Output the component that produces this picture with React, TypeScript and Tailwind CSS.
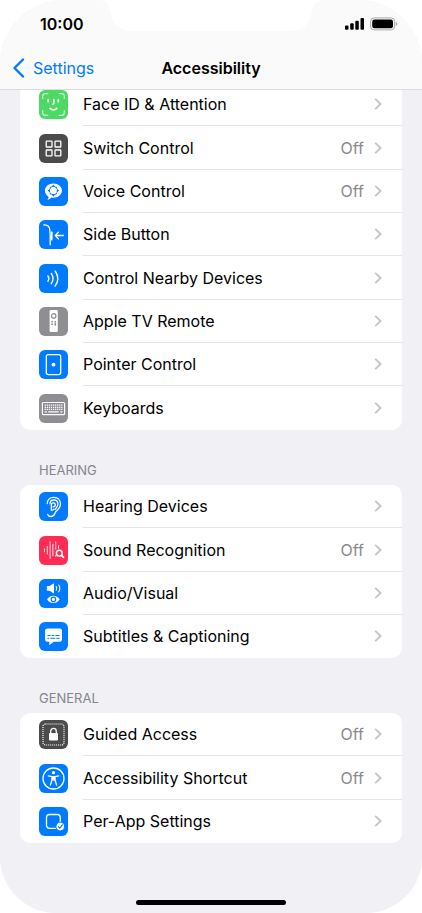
import type { ReactNode } from 'react';

interface Item {
  label: string;
  color: string;
  icon: ReactNode;
  value?: string;
}

interface Section {
  title?: string;
  items: Item[];
}

const BLUE = 'bg-[#007aff]';
const GRAY = 'bg-[#8e8e93]';
const DARK = 'bg-[#4b4b4c]';

const SECTIONS: Section[] = [
  {
    items: [
      {
        label: 'Face ID & Attention',
        color: 'bg-[#4cd964]',
        icon: (
          <>
            <path
              d="M3.7 8.5V6.2a2.5 2.5 0 0 1 2.5-2.5h2.6M20.2 3.7h2.6a2.5 2.5 0 0 1 2.5 2.5v2.3M25.3 20.5v2.3a2.5 2.5 0 0 1-2.5 2.5h-2.6M8.8 25.3H6.2a2.5 2.5 0 0 1-2.5-2.5v-2.3"
              strokeWidth="1.2"
              opacity="0.8"
            />
            <path d="M9.2 9.7v2M19.3 9.7v2" strokeWidth="1.8" />
            <path d="M14.8 9.6v3.6q0 1.1-1.3 1.1M11 18.4q3.4 3 6.8 0" strokeWidth="1.5" />
          </>
        ),
      },
      {
        label: 'Switch Control',
        color: DARK,
        value: 'Off',
        icon: (
          <g strokeWidth="1.3">
            <rect x="7.2" y="7.2" width="5.8" height="5.8" rx="0.6" />
            <rect x="16" y="7.2" width="5.8" height="5.8" rx="0.6" />
            <rect x="7.2" y="16" width="5.8" height="5.8" rx="0.6" />
            <rect x="16" y="16" width="5.8" height="5.8" rx="0.6" />
          </g>
        ),
      },
      {
        label: 'Voice Control',
        color: BLUE,
        value: 'Off',
        icon: (
          <>
            <path
              d="M14.4 6.4c4.9 0 8.6 3.2 8.6 7.2s-3.7 7.2-8.6 7.2c-.8 0-1.4-.1-2-.2-.9 1.3-2.2 2-4 2.2.9-1 1.2-2 1.1-3.1C7.3 18.4 5.9 16.2 5.9 13.6c0-4 3.7-7.2 8.5-7.2z"
              fill="#fff"
              stroke="none"
            />
            <path
              d="M14.4 7.8l2.2 2.3h-4.4zM14.4 19.4l2.2-2.3h-4.4zM8.7 13.6l2.3-2.2v4.4zM20.1 13.6l-2.3-2.2v4.4z"
              fill="#007aff"
              stroke="none"
            />
            <path d="M11.2 11l.8-.8M16.8 10.2l.8.8M11.2 16.2l.8.8M16.8 17l.8-.8" stroke="#007aff" strokeWidth="1.2" />
          </>
        ),
      },
      {
        label: 'Side Button',
        color: BLUE,
        icon: (
          <>
            <path d="M4.8 4.9c4.3 0 5.7 1.4 6 4.8.2 2.2.4 4 .4 6.5v8.6" strokeWidth="1.3" />
            <path d="M12.7 12.3v7.2" strokeWidth="1.8" />
            <path d="M16.2 15.5h8.3M19.4 12.3l-3.2 3.2 3.2 3.2" strokeWidth="1.3" />
          </>
        ),
      },
      {
        label: 'Control Nearby Devices',
        color: BLUE,
        icon: (
          <g strokeWidth="1.4">
            <path d="M8.9 11.9q1.9 2.7 0 5.4" />
            <path d="M12.3 9.5q3.5 5.1 0 10.2" />
            <path d="M16.1 7q5.4 7.6 0 15.2" />
          </g>
        ),
      },
      {
        label: 'Apple TV Remote',
        color: GRAY,
        icon: (
          <>
            <rect x="10.6" y="3" width="8.2" height="22" rx="1.3" fill="#fff" stroke="none" />
            <circle cx="14.7" cy="8.9" r="2.2" stroke="#8e8e93" strokeWidth="1.2" />
            <path d="M13.1 14.6v.1M16.3 14.6v.1M13.1 17.1v.1M16.3 16.7v1.1" stroke="#8e8e93" strokeWidth="1.7" />
          </>
        ),
      },
      {
        label: 'Pointer Control',
        color: BLUE,
        icon: (
          <>
            <rect x="7.3" y="4.6" width="14.4" height="20" rx="2" strokeWidth="1.3" />
            <circle cx="14.5" cy="14.7" r="1.9" fill="#fff" stroke="none" />
          </>
        ),
      },
      {
        label: 'Keyboards',
        color: GRAY,
        icon: (
          <>
            <rect x="3.4" y="8.5" width="22.2" height="12.2" rx="1" strokeWidth="1.2" />
            <path
              d="M5.7 11.2h17.8M5.7 13.3h17.8M5.7 15.4h17.8"
              strokeWidth="1.3"
              strokeDasharray="1.3 0.76"
              strokeLinecap="butt"
            />
            <path d="M5.7 17.8h2.2M9.3 17.8h10.4M21.3 17.8h2.2" strokeWidth="1.3" strokeLinecap="butt" />
          </>
        ),
      },
    ],
  },
  {
    title: 'Hearing',
    items: [
      {
        label: 'Hearing Devices',
        color: BLUE,
        icon: (
          <g strokeWidth="1.3">
            <path d="M8.3 11.5c0-3.8 2.9-6.2 6.5-6.2 4 0 6.7 2.8 6.7 6.8 0 5.2-4.4 5.8-5.5 9.2-.7 2.2-2.1 3.2-4.1 3.2-1.6 0-2.7-.8-3.2-2.1" />
            <path d="M11 11.7c0-2.2 1.6-3.7 3.9-3.7 2.4 0 4 1.6 4 4 0 2.7-1.7 3.7-2.8 5.5" />
            <path d="M12.3 18.3v-5.4c0-1.2.8-2 2-2s2 .8 2 1.9c0 1.3-1 2-2.3 2M12.3 18.3c1.2 0 2-.3 2.6-1.2" />
          </g>
        ),
      },
      {
        label: 'Sound Recognition',
        color: 'bg-[#ff2d55]',
        value: 'Off',
        icon: (
          <>
            <path
              d="M5.5 12.9v2.8M8.3 10.4v7.6M11.1 5.7v16.6M13.9 8.5v11.2M16.7 5.7v7.5M16.7 19.5v.8M19.5 9.8v2.6"
              strokeWidth="1"
              opacity="0.85"
            />
            <circle cx="20.3" cy="17.2" r="2.9" strokeWidth="1.4" />
            <path d="M22.5 19.4l2 2" strokeWidth="1.7" />
          </>
        ),
      },
      {
        label: 'Audio/Visual',
        color: BLUE,
        icon: (
          <>
            <path
              d="M7.8 7.7q0-.6.6-.6h2.2l3.7-2.5q.7-.4.7.4v8.9q0 .8-.7.4l-3.7-2.6H8.4q-.6 0-.6-.6z"
              fill="#fff"
              stroke="none"
            />
            <path d="M17.2 7.5q1.3 1.9 0 3.8M19.7 6q2.3 3.4 0 6.8" strokeWidth="1.1" />
            <path
              d="M8.1 20.4c1.6-2.3 3.7-3.6 6.3-3.6s4.7 1.3 6.3 3.6c-1.6 2.3-3.7 3.6-6.3 3.6s-4.7-1.3-6.3-3.6z"
              fill="#fff"
              stroke="none"
            />
            <circle cx="14.4" cy="20.4" r="2.2" fill="#fff" stroke="#007aff" strokeWidth="1.2" />
          </>
        ),
      },
      {
        label: 'Subtitles & Captioning',
        color: BLUE,
        icon: (
          <>
            <path
              d="M8.3 6.4h12.5q2.2 0 2.2 2.2v8.9q0 2.2-2.2 2.2h-6.2l-3.6 3.1q-.7.5-.7-.4v-2.7h-2q-2.2 0-2.2-2.2V8.6q0-2.2 2.2-2.2z"
              fill="#fff"
              stroke="none"
            />
            <path
              d="M8.4 13.5h3.2M12.7 13.5h2.6M16.4 13.5h4.2M8.4 16.3h1.9M11.4 16.3h4.9M17.4 16.3h3.2"
              stroke="#007aff"
              strokeWidth="1"
              strokeLinecap="butt"
            />
          </>
        ),
      },
    ],
  },
  {
    title: 'General',
    items: [
      {
        label: 'Guided Access',
        color: DARK,
        value: 'Off',
        icon: (
          <>
            <rect
              x="4"
              y="4"
              width="21"
              height="21"
              rx="2.5"
              strokeWidth="1.2"
              strokeDasharray="1.1 0.9"
              strokeLinecap="butt"
            />
            <rect x="10" y="13" width="9" height="7.5" rx="1" fill="#fff" stroke="none" />
            <path d="M11.7 13.5v-2.3a2.8 2.8 0 0 1 5.6 0v2.3" strokeWidth="1.3" />
          </>
        ),
      },
      {
        label: 'Accessibility Shortcut',
        color: BLUE,
        value: 'Off',
        icon: (
          <>
            <circle cx="14.5" cy="14.5" r="10.5" strokeWidth="1.3" />
            <circle cx="14.5" cy="8.7" r="1.6" fill="#fff" stroke="none" />
            <path d="M9.2 11.8l3.9.8v3.2l-1.7 5.2M19.8 11.8l-3.9.8v3.2l1.7 5.2" strokeWidth="1.3" />
            <path d="M12.6 12h3.8v4.4h-3.8z" fill="#fff" stroke="none" />
          </>
        ),
      },
      {
        label: 'Per-App Settings',
        color: BLUE,
        icon: (
          <>
            <rect x="7.5" y="7.5" width="13.8" height="13.8" rx="3" strokeWidth="1.3" />
            <circle cx="21.3" cy="19.5" r="4.4" fill="#fff" stroke="#007aff" strokeWidth="1" />
            <path d="M19.4 19.7l1.4 1.5 2.5-3.4" stroke="#007aff" strokeWidth="1.1" />
          </>
        ),
      },
    ],
  },
];

function Row({ item }: { item: Item }) {
  return (
    <li className="group flex min-h-[43px] nth-[3n+2]:min-h-11">
      <a href="#" className="flex flex-1 items-center gap-[15px] pl-[19px]">
        <svg
          viewBox="0 0 29 29"
          className={`size-[29px] shrink-0 rounded-[6px] ${item.color}`}
          fill="none"
          stroke="#fff"
          strokeLinecap="round"
          strokeLinejoin="round"
          aria-hidden="true"
        >
          {item.icon}
        </svg>
        <span className="flex flex-1 items-center self-stretch border-b border-[#e4e4e6] pr-5 group-last:border-transparent">
          <span className="flex-1">{item.label}</span>
          {item.value && <span className="text-[#8a8a8e]">{item.value}</span>}
          <svg
            viewBox="0 0 8 12"
            className="ml-[10px] h-3 w-2"
            fill="none"
            stroke="#c4c4c7"
            strokeWidth="1.8"
            aria-hidden="true"
          >
            <path d="M1.2 0.8L6.6 6L1.2 11.2" />
          </svg>
        </span>
      </a>
    </li>
  );
}

function StatusBar() {
  return (
    <div className="flex h-12 items-center justify-between pr-6 pl-10">
      <span className="font-semibold">10:00</span>
      <svg viewBox="0 0 54 14" className="h-[14px] w-[54px]" aria-hidden="true">
        <rect x="1" y="8.5" width="3.5" height="4.3" rx="1" />
        <rect x="6.2" y="6.3" width="3.5" height="6.5" rx="1" />
        <rect x="11.3" y="3.7" width="3.5" height="9.1" rx="1" />
        <rect x="16.5" y="1" width="3.5" height="11.8" rx="1" />
        <rect x="26.6" y="0.9" width="24" height="12" rx="3.5" fill="none" stroke="#a9a9a9" />
        <rect x="28.2" y="2.5" width="20.8" height="8.8" rx="2.2" />
        <path d="M51.8 5q1.5.5 1.5 1.9t-1.5 1.9z" fill="#a9a9a9" />
      </svg>
    </div>
  );
}

function Header() {
  return (
    <header className="relative z-10 border-b border-[#dcdcde] bg-[#fafafa]">
      <svg viewBox="0 0 222 31" className="absolute top-0 left-1/2 h-[31px] w-[222px] -translate-x-1/2" aria-hidden="true">
        <path d="M0 0C7 1 9 5 10 11C12 24 19 31 33 31H189C203 31 210 24 212 11C213 5 215 1 222 0Z" fill="#fff" />
      </svg>
      <StatusBar />
      <nav className="grid h-[41px] grid-cols-[1fr_auto_1fr] items-center px-3 pb-0.5">
        <a href="#" className="flex items-center gap-2 text-[#007aff]">
          <svg viewBox="0 0 13 20" className="h-5 w-[13px]" fill="none" stroke="currentColor" strokeWidth="2.4" aria-hidden="true">
            <path d="M11 1.5L2.5 10L11 18.5" strokeLinecap="round" strokeLinejoin="round" />
          </svg>
          Settings
        </a>
        <h1 className="font-semibold">Accessibility</h1>
      </nav>
    </header>
  );
}

export default function App() {
  return (
    <div className="min-h-screen bg-white">
      <div className="flex min-h-screen flex-col overflow-hidden rounded-t-[64px] rounded-b-[56px] bg-[#f0f0f5] font-['Inter','Liberation_Sans',sans-serif] text-base text-black">
        <Header />
        <main className="-mt-[7px] px-5">
          {SECTIONS.map((section, i) => (
            <section key={i}>
              {section.title && (
                <h2 className="pt-[31px] pb-[6px] pl-[19px] text-[13px] leading-[18px] text-[#85858b] uppercase">
                  {section.title}
                </h2>
              )}
              <ul className="overflow-hidden rounded-[10px] bg-white">
                {section.items.map((item) => (
                  <Row key={item.label} item={item} />
                ))}
              </ul>
            </section>
          ))}
        </main>
        <div className="mx-auto mt-auto mb-2 h-[5px] w-[150px] rounded-full bg-black" />
      </div>
    </div>
  );
}
